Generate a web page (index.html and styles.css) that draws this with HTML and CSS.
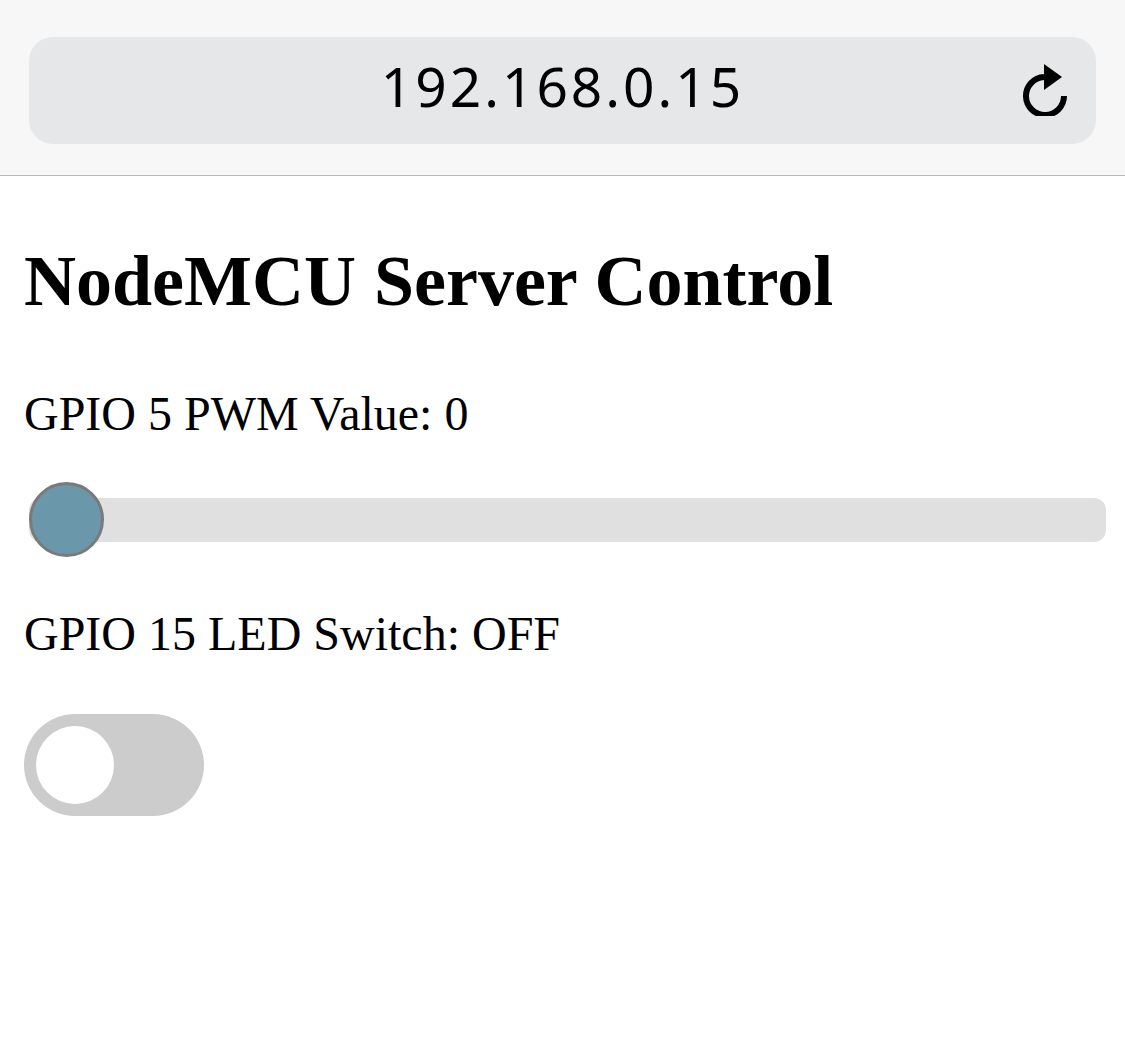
FILE: index.html
```html
<!DOCTYPE html>
<html lang="en">
<head>
  <meta charset="UTF-8">
  <title>NodeMCU Server Control</title>
  <meta name="viewport" content="width=device-width, initial-scale=1">
  <link rel="stylesheet" href="styles.css">
</head>
<body>
  <div class="browser-bar">
    <div class="url-pill">
      <span class="url-text">192.168.0.15</span>
      <svg class="reload" width="52" height="56" viewBox="0 0 52 56">
        <path d="M44 36 A19 19 0 1 1 24 17" fill="none" stroke="#000" stroke-width="6" stroke-linecap="butt"/>
        <polygon points="24,4 42,17 24,30" fill="#000"/>
      </svg>
    </div>
  </div>

  <div class="page">
    <h2>NodeMCU Server Control</h2>
    <p class="label-pwm">GPIO 5 PWM Value: <span id="pwmValue">0</span></p>
    <input type="range" id="pwmSlider" class="slider" min="0" max="1023" value="0">
    <p class="label-led">GPIO 15 LED Switch: <span id="ledState">OFF</span></p>
    <label class="switch">
      <input type="checkbox" id="ledToggle">
      <span class="knob"></span>
    </label>
  </div>

  <script>
    document.addEventListener("DOMContentLoaded", function () {
      const slider = document.getElementById("pwmSlider");
      const toggle = document.getElementById("ledToggle");
      slider.addEventListener("input", () => {
        document.getElementById("pwmValue").textContent = slider.value;
      });
      toggle.addEventListener("change", () => {
        document.getElementById("ledState").textContent = toggle.checked ? "ON" : "OFF";
      });
    });
  </script>
</body>
</html>
```

FILE: styles.css
```css
* { box-sizing: border-box; }
body {
  margin: 0;
  background: #fff;
  font-family: "Liberation Serif", "Times New Roman", serif;
}
.browser-bar {
  background: #f7f7f7;
  height: 176px;
  padding: 37px 29px 0 29px;
  border-bottom: 1px solid #b9b9b9;
}
.url-pill {
  position: relative;
  height: 107px;
  padding-bottom: 10px;
  background: #e6e7e9;
  border-radius: 24px;
  display: flex;
  align-items: center;
  justify-content: center;
}
.url-text {
  font-family: "Noto Sans", sans-serif;
  font-size: 55px;
  color: #000;
  letter-spacing: 3px;
}
.reload {
  position: absolute;
  right: 24px;
  top: 23px;
}
.page {
  padding: 0 19px 0 24px;
}
h2 {
  font-size: 72px;
  font-weight: bold;
  margin: 64px 0 0 0;
  line-height: 1.15;
}
p {
  font-size: 48px;
  margin: 0;
  line-height: 1.15;
}
.label-pwm {
  margin-top: 63px;
}
.label-led {
  margin-top: 64px;
}
.slider {
  -webkit-appearance: none;
  appearance: none;
  display: block;
  width: 1077px;
  height: 44px;
  margin: 57px 0 0 5px;
  background: #e0e0e0;
  border-radius: 12px;
  outline: none;
}
.slider::-webkit-slider-thumb {
  -webkit-appearance: none;
  appearance: none;
  width: 75px;
  height: 75px;
  border-radius: 50%;
  background: #6b97aa;
  border: 3px solid #7a7a7a;
  cursor: pointer;
}
.switch {
  position: relative;
  display: block;
  width: 180px;
  height: 102px;
  margin-top: 53px;
}
.switch input {
  opacity: 0;
  width: 0;
  height: 0;
}
.knob {
  position: absolute;
  inset: 0;
  background: #ccc;
  border-radius: 51px;
  cursor: pointer;
}
.knob::before {
  content: "";
  position: absolute;
  left: 12px;
  top: 12px;
  width: 78px;
  height: 78px;
  border-radius: 50%;
  background: #fff;
}
.switch input:checked + .knob {
  background: #2196f3;
}
.switch input:checked + .knob::before {
  transform: translateX(78px);
}
```
